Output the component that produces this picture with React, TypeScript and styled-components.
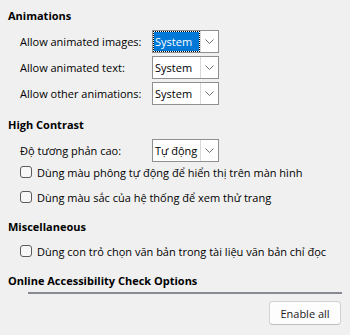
import styled, { createGlobalStyle } from "styled-components";

const GlobalStyle = createGlobalStyle`
  html, body {
    margin: 0;
    padding: 0;
    background: #f0f0f0;
  }
  body {
    font-family: "Open Sans", "Noto Sans", sans-serif;
    font-size: 11px;
    color: #000;
  }
`;

type ComboItem = { label: string; value: string; focused?: boolean };

const animationRows: ComboItem[] = [
  { label: "Allow animated images:", value: "System", focused: true },
  { label: "Allow animated text:", value: "System" },
  { label: "Allow other animations:", value: "System" },
];

function Chevron() {
  return (
    <svg width="9" height="6" viewBox="0 0 9 6">
      <polyline points="0.5,0.5 4.5,4.5 8.5,0.5" fill="none" stroke="#6d6d6d" strokeWidth="1" />
    </svg>
  );
}

function Combo({ value, focused }: { value: string; focused?: boolean }) {
  return (
    <ComboBox>
      <ComboText>
        <ComboValue $focused={focused}>{value}</ComboValue>
      </ComboText>
      <ComboButton>
        <Chevron />
      </ComboButton>
    </ComboBox>
  );
}

function Check({ label }: { label: string }) {
  return (
    <CheckRow>
      <CheckBox />
      <span>{label}</span>
    </CheckRow>
  );
}

export default function App() {
  return (
    <>
      <GlobalStyle />
      <Page>
        <Section>
          <Heading>Animations</Heading>
          <Body>
            {animationRows.map((r) => (
              <ComboRow key={r.label}>
                <Label>{r.label}</Label>
                <Combo value={r.value} focused={r.focused} />
              </ComboRow>
            ))}
          </Body>
        </Section>

        <Section>
          <Heading>High Contrast</Heading>
          <Body>
            <ComboRow>
              <Label>Độ tương phản cao:</Label>
              <Combo value="Tự động" />
            </ComboRow>
            <Check label="Dùng màu phông tự động để hiển thị trên màn hình" />
            <Check label="Dùng màu sắc của hệ thống để xem thử trang" />
          </Body>
        </Section>

        <Section>
          <Heading>Miscellaneous</Heading>
          <Body>
            <Check label="Dùng con trỏ chọn văn bản trong tài liệu văn bản chỉ đọc" />
          </Body>
        </Section>

        <Section>
          <Heading>Online Accessibility Check Options</Heading>
          <Separator />
          <Footer>
            <Button>Enable all</Button>
          </Footer>
        </Section>
      </Page>
    </>
  );
}

const Page = styled.div`
  width: 350px;
  height: 335px;
  box-sizing: border-box;
  padding: 8px 0 0 8px;
  display: flex;
  flex-direction: column;
  gap: 12px;
`;

const Section = styled.div`
  display: flex;
  flex-direction: column;
`;

const Heading = styled.div`
  font-weight: 700;
  line-height: 16px;
  height: 16px;
  white-space: nowrap;
`;

const Body = styled.div`
  display: flex;
  flex-direction: column;
  padding-left: 12px;
  margin-top: 6px;
`;

const ComboRow = styled.div`
  display: grid;
  grid-template-columns: 132px auto;
  align-items: center;
  height: 23px;
  & + & {
    margin-top: 3px;
  }
`;

const Label = styled.span`
  white-space: nowrap;
`;

const ComboBox = styled.div`
  width: 67px;
  height: 23px;
  box-sizing: border-box;
  border: 1px solid #8f8f8f;
  background: #fff;
  display: flex;
`;

const ComboText = styled.div`
  flex: 1;
  min-width: 0;
  padding: 1px;
  display: flex;
`;

const ComboValue = styled.div<{ $focused?: boolean }>`
  flex: 1;
  display: flex;
  align-items: center;
  padding-left: 1px;
  white-space: nowrap;
  overflow: hidden;
  background: ${(p) => (p.$focused ? "#0078d7" : "transparent")};
  color: ${(p) => (p.$focused ? "#fff" : "#000")};
  outline: ${(p) => (p.$focused ? "1px dotted #000" : "none")};
  outline-offset: 0;
`;

const ComboButton = styled.div`
  width: 17px;
  flex: none;
  border-left: 1px solid #d9d9d9;
  display: flex;
  align-items: center;
  justify-content: center;
`;

const CheckRow = styled.div`
  display: flex;
  align-items: center;
  gap: 5px;
  height: 20px;
  white-space: nowrap;
  & + & {
    margin-top: 5px;
  }
`;

const CheckBox = styled.span`
  width: 12px;
  height: 12px;
  box-sizing: border-box;
  border: 1px solid #5c5c5c;
  border-radius: 3px;
  background: #f7f7f7;
  flex: none;
`;

const Separator = styled.div`
  margin: 3px 8px 0 20px;
  height: 2px;
  background: #878a92;
`;

const Footer = styled.div`
  display: flex;
  justify-content: flex-end;
  padding: 7px 9px 0 0;
`;

const Button = styled.button`
  width: 72px;
  height: 24px;
  border: 1px solid #d3d3d3;
  border-bottom-color: #bdbdbd;
  border-radius: 4px;
  background: #fdfdfd;
  font: inherit;
  color: #1a1a1a;
  padding: 0;
`;
